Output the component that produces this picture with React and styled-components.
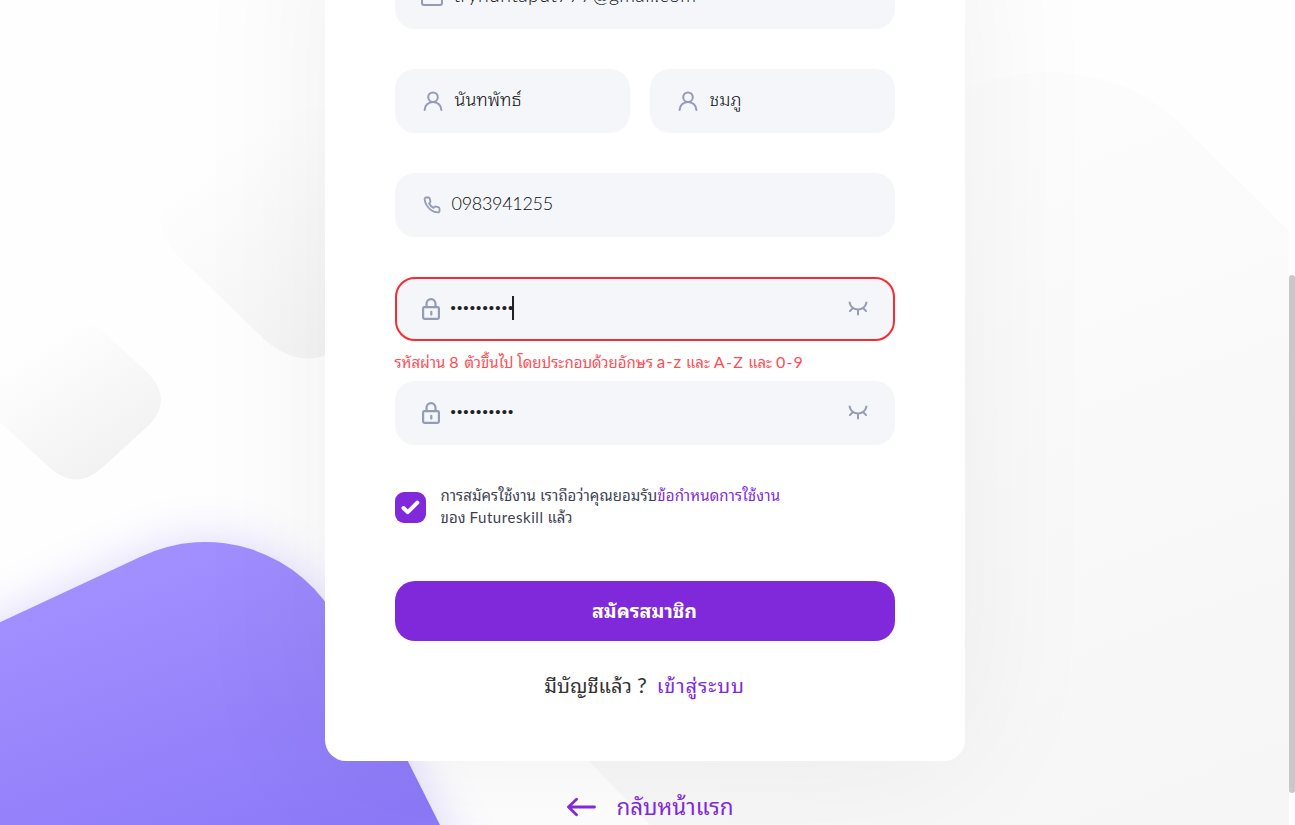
import React from "react";
import styled, { createGlobalStyle } from "styled-components";

const GlobalStyle = createGlobalStyle`
  * { box-sizing: border-box; }
  html, body { margin: 0; overflow: hidden; background: #fff; }
  body { font-family: Lato, "Noto Sans Thai Looped", "Noto Sans Thai", "Loma", sans-serif; }
`;

const Page = styled.div`
  display: flex;
  height: 825px;
  overflow: hidden;
`;

const Content = styled.main`
  position: relative;
  flex: 1;
  display: flex;
  flex-direction: column;
  align-items: center;
  overflow: hidden;
  background: #fefefe;
`;

const Backdrop = styled.svg`
  position: absolute;
  inset: 0;
`;

const ScrollTrack = styled.div`
  width: 6px;
  padding-top: 275px;
  background: #fff;
`;

const ScrollThumb = styled.div`
  height: 518px;
  border-radius: 3px;
  background: #c8c8c8;
`;

const Card = styled.section`
  position: relative;
  flex: none;
  width: 640px;
  height: 861px;
  margin-top: -100px;
  padding: 65px 70px 0;
  border-radius: 21px;
  background: #fff;
  box-shadow: 0 0 150px rgba(0, 0, 0, 0.06);
`;

const FieldRow = styled.div`
  display: grid;
  grid-template-columns: ${(p) => p.$columns || "1fr"};
  gap: 20px;
  margin-bottom: ${(p) => (p.$tight ? 0 : 40)}px;
`;

const Field = styled.label`
  display: flex;
  align-items: center;
  height: 64px;
  padding: 0 ${(p) => (p.$invalid ? 25 : 27)}px 0 ${(p) => (p.$invalid ? 23 : 25)}px;
  border-radius: 20px;
  border: ${(p) => (p.$invalid ? "2px solid #f82b32" : "none")};
  background: #f4f6fa;
`;

const IconSlot = styled.span`
  display: flex;
  flex: none;
  justify-content: center;
  width: ${(p) => p.$width || 22}px;
  margin-right: ${(p) => p.$gap || 9}px;
`;

const Value = styled.span`
  flex: 1;
  display: flex;
  align-items: center;
  color: #0c0c0c;
  font-weight: 300;
  font-size: ${(p) => p.$size || 18}px;
  line-height: 24px;
  letter-spacing: ${(p) => p.$track || 0}px;
  padding-bottom: ${(p) => p.$lift ?? 3}px;
  white-space: nowrap;
`;

const Dots = styled(Value)`
  color: #212121;
  font-family: "Liberation Sans", sans-serif;
  font-weight: 400;
  font-size: 15px;
  letter-spacing: 1.14px;
  padding-bottom: 2px;
`;

const Caret = styled.span`
  width: 2px;
  height: 24px;
  margin-left: -2px;
  background: #212121;
`;

const Latin = styled.span`
  font-size: ${(p) => p.$size || 15}px;
  letter-spacing: ${(p) => p.$track || 0}px;
`;

const ErrorText = styled.p`
  height: 40px;
  margin: 0;
  color: #ff4d55;
  font-size: 15px;
  line-height: 41px;
  white-space: nowrap;
`;

const Terms = styled.div`
  display: flex;
  align-items: center;
  height: 44px;
  gap: 15px;
`;

const CheckBox = styled.span`
  display: flex;
  align-items: center;
  justify-content: center;
  width: 31px;
  height: 31px;
  border-radius: 9px;
  background: #8029db;
`;

const TermsText = styled.p`
  margin: 0;
  padding-bottom: 2px;
  color: #3c3f50;
  font-size: 15px;
  line-height: 22px;
  letter-spacing: 0.08px;
  white-space: nowrap;
`;

const Accent = styled.a`
  color: #8029db;
  letter-spacing: ${(p) => p.$track || 0.12}px;
`;

const SubmitButton = styled.button`
  display: block;
  width: 500px;
  height: 60px;
  margin-top: 52px;
  padding: 0;
  border: 0;
  border-radius: 20px;
  background: #8029db;
  color: #fff;
  font: 700 19.5px/58px Lato, "Noto Sans Thai Looped", "Noto Sans Thai", "Loma", sans-serif;
`;

const LoginLine = styled.p`
  display: flex;
  justify-content: center;
  gap: 10px;
  margin: 29px 0 0;
  color: #333;
  font-size: 20px;
  line-height: 30px;
  white-space: nowrap;
`;

const BackLink = styled.a`
  position: relative;
  display: flex;
  align-items: center;
  gap: 20px;
  height: 36px;
  margin-top: 28px;
  margin-left: 12px;
  color: #8029db;
  font-size: 22.4px;
  line-height: 36px;
  white-space: nowrap;
`;

const stroke = { fill: "none", stroke: "#929cb3", strokeWidth: 2, strokeLinecap: "round", strokeLinejoin: "round" };

const MailIcon = () => (
  <svg width="22" height="20" viewBox="0 0 22 20" {...stroke}>
    <rect x="1" y="1" width="20" height="17" rx="2" />
    <path d="M2 4l9 6 9-6" />
  </svg>
);

const UserIcon = () => (
  <svg width="20" height="20" viewBox="0 0 20 20" {...stroke}>
    <circle cx="10" cy="6.200" r="4.800" />
    <path d="M1.600 19a8.400 8 0 0 1 16.800 0" />
  </svg>
);

const PhoneIcon = () => (
  <svg width="18" height="18" viewBox="0 0 24 24" {...stroke} strokeWidth="2.400">
    <path d="M22 16.920v3a2 2 0 0 1-2.180 2 19.790 19.790 0 0 1-8.630-3.070 19.500 19.500 0 0 1-6-6A19.790 19.790 0 0 1 2.120 4.180 2 2 0 0 1 4.110 2h3a2 2 0 0 1 2 1.720c.127.960.361 1.903.7 2.810a2 2 0 0 1-.450 2.110L8.090 9.910a16 16 0 0 0 6 6l1.270-1.270a2 2 0 0 1 2.110-.450c.907.339 1.850.573 2.810.7A2 2 0 0 1 22 16.920z" />
  </svg>
);

const LockIcon = () => (
  <svg width="18" height="22" viewBox="0 0 18 22" {...stroke} strokeWidth="2.200">
    <rect x="1.100" y="9.100" width="15.800" height="11.800" rx="1.300" />
    <path d="M4.500 9V6a4.500 4.900 0 0 1 9 0V9M9.300 13.800v2.800" />
  </svg>
);

const ClosedEyeIcon = () => (
  <svg width="20" height="17" viewBox="0 0 20 17" {...stroke}>
    <path d="M1.600 1.500c1.600 9.300 15.200 9.300 16.800 0M4.700 7.200l-2.800 2.900M15.300 7.200l2.800 2.900M10 9v4.500" />
  </svg>
);

const CheckIcon = () => (
  <svg width="19" height="15" viewBox="0 0 19 15" fill="none" stroke="#fff" strokeWidth="4" strokeLinecap="round" strokeLinejoin="round">
    <path d="M2.500 8l4.200 4.200L16.300 2.600" />
  </svg>
);

const ArrowIcon = () => (
  <svg width="29" height="20" viewBox="0 0 29 20" fill="none" stroke="#8029db" strokeWidth="2.800" strokeLinecap="round" strokeLinejoin="round">
    <path d="M9.500 2.300L1.500 10l8 7.700M1.500 10h26" />
  </svg>
);

const Shapes = () => (
  <Backdrop width="1289" height="825" viewBox="0 0 1289 825">
    <defs>
      <linearGradient id="small" gradientUnits="userSpaceOnUse" x1="40" y1="345" x2="115" y2="460">
        <stop offset="0" stopColor="#fefefe" />
        <stop offset="1" stopColor="#f2f2f2" />
      </linearGradient>
      <linearGradient id="medium" gradientUnits="userSpaceOnUse" x1="225" y1="150" x2="365" y2="350">
        <stop offset="0" stopColor="#fefefe" />
        <stop offset="1" stopColor="#f3f3f3" />
      </linearGradient>
      <linearGradient id="large" gradientUnits="userSpaceOnUse" x1="850" y1="50" x2="1150" y2="850">
        <stop offset="0" stopColor="#fdfdfd" />
        <stop offset="1" stopColor="#f6f6f6" />
      </linearGradient>
      <linearGradient id="violet" gradientUnits="userSpaceOnUse" x1="130" y1="550" x2="250" y2="870">
        <stop offset="0" stopColor="#a390ff" />
        <stop offset="1" stopColor="#8c79f8" />
      </linearGradient>
      <filter id="glow" x="-40%" y="-60%" width="180%" height="220%">
        <feGaussianBlur stdDeviation="24" />
      </filter>
    </defs>
    <path fill="url(#small)" d="M-20 404L50 468Q76 491 102 468L150 424Q172 400 150 375L102 330Q76 308 50 330L-20 394Z" />
    <path fill="url(#medium)" d="M178 256L265 340Q308 377 351 340L400 290V107H265L178 190Q144 222 178 256Z" />
    <path fill="url(#large)" d="M965 90Q1005 72 1050 72C1110 74 1150 95 1180 123L1289 231V825H650L500 668V500Z" />
    <path fill="#7c62ff" opacity="0.250" filter="url(#glow)" d="M-80 659L140 557A150 150 0 0 1 339 624L520 985H-80Z" />
    <path fill="url(#violet)" d="M-10 627L140 557A150 150 0 0 1 339 624L450 845H-10Z" />
  </Backdrop>
);

export default function App() {
  return (
    <>
      <GlobalStyle />
      <Page>
        <Content>
          <Shapes />
          <Card>
            <FieldRow>
              <Field>
                <IconSlot $width={25}><MailIcon /></IconSlot>
                <Value $size={19.5} $track={0.38} $lift={4}>trynuntaput777@gmail.com</Value>
              </Field>
            </FieldRow>
            <FieldRow $columns="235px 245px">
              <Field>
                <IconSlot $width={26}><UserIcon /></IconSlot>
                <Value $lift={4}>นันทพัทธ์</Value>
              </Field>
              <Field>
                <IconSlot $width={26}><UserIcon /></IconSlot>
                <Value $lift={4}>ชมภู</Value>
              </Field>
            </FieldRow>
            <FieldRow>
              <Field>
                <IconSlot $width={24} $gap={8}><PhoneIcon /></IconSlot>
                <Value $track={-0.3} $lift={4}>0983941255</Value>
              </Field>
            </FieldRow>
            <FieldRow $tight>
              <Field $invalid>
                <IconSlot><LockIcon /></IconSlot>
                <Dots>••••••••••<Caret /></Dots>
                <ClosedEyeIcon />
              </Field>
            </FieldRow>
            <ErrorText>
              รหัสผ่าน <Latin $size={16} $track={0.9}>8 </Latin>ตัวขึ้นไป โดยประกอบด้วยอักษร{" "}
              <Latin $size={17} $track={1}>a-z</Latin> และ{" "}
              <Latin $size={16} $track={1.4}>A-Z</Latin> และ <Latin $size={16} $track={1.1}>0-9</Latin>
            </ErrorText>
            <FieldRow>
              <Field>
                <IconSlot><LockIcon /></IconSlot>
                <Dots>••••••••••</Dots>
                <ClosedEyeIcon />
              </Field>
            </FieldRow>
            <Terms>
              <CheckBox><CheckIcon /></CheckBox>
              <TermsText>
                การสมัครใช้งาน เราถือว่าคุณยอมรับ<Accent>ข้อกำหนดการใช้งาน</Accent>
                <br />
                ของ <Latin $track={0.55}>Futureskill</Latin> แล้ว
              </TermsText>
            </Terms>
            <SubmitButton>สมัครสมาชิก</SubmitButton>
            <LoginLine>
              <span>มีบัญชีแล้ว <Latin $size={22}>?</Latin></span>
              <Accent $track={0.85}>เข้าสู่ระบบ</Accent>
            </LoginLine>
          </Card>
          <BackLink>
            <ArrowIcon />
            <span>กลับหน้าแรก</span>
          </BackLink>
        </Content>
        <ScrollTrack><ScrollThumb /></ScrollTrack>
      </Page>
    </>
  );
}
